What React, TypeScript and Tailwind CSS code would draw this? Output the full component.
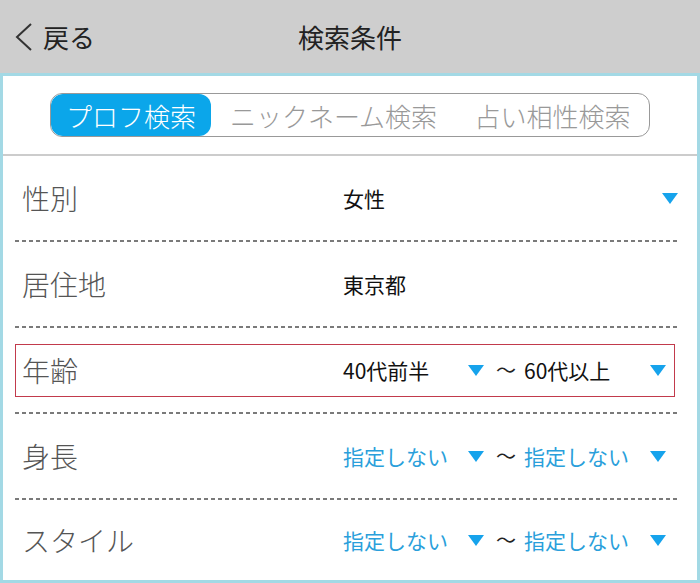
import React from "react"

const font = { fontFamily: '"Noto Sans CJK JP", "Noto Sans", sans-serif' }

function Triangle() {
    return (
        <svg width="16" height="11" viewBox="0 0 16 11" className="shrink-0">
            <polygon points="0,0 16,0 8,11" fill="#16a3ec" />
        </svg>
    )
}

function Dashed() {
    return (
        <div className="ml-[12px] mr-[19px] h-[2px] bg-[repeating-linear-gradient(to_right,#7a7a7a_0_4px,transparent_4px_7px)]" />
    )
}

type T_Range = { from: string; to: string; blue?: boolean }

function RangeValue(props: T_Range) {
    const color = props.blue ? "text-[#2a9fdb]" : "text-[#111]"
    return (
        <div className="flex items-center">
            <span className={`w-[125px] text-[21px] leading-none ${color}`}>{props.from}</span>
            <Triangle />
            <span className="ml-[12px] w-[16px] text-[20px] leading-none text-[#222]">〜</span>
            <span className={`ml-[12px] w-[126px] text-[21px] leading-none ${color}`}>{props.to}</span>
            <Triangle />
        </div>
    )
}

function Row(props: { label: string; children: React.ReactNode; highlight?: boolean; last?: boolean }) {
    return (
        <div className={`flex items-center pl-[12px] pr-[22px] ${props.last ? "flex-1" : "h-[84px]"}`}>
            <div
                className={`flex h-[53px] flex-1 items-center border pl-[6px] ${
                    props.highlight ? "border-[#c23a4c]" : "border-transparent"
                }`}>
                <span className="w-[321px] text-[28px] leading-none font-light text-[#555]">{props.label}</span>
                <div className="flex flex-1 items-center">{props.children}</div>
            </div>
        </div>
    )
}

export default function App() {
    return (
        <div className="flex h-[583px] w-[700px] flex-col bg-white" style={font}>
            <div className="grid h-[73px] grid-cols-[1fr_auto_1fr] items-center bg-[#cecece]">
                <div className="flex items-center gap-[9px] pl-[14px]">
                    <svg width="20" height="30" viewBox="0 0 20 30">
                        <polyline points="17,2 3,15 17,28" fill="none" stroke="#333" strokeWidth="2" />
                    </svg>
                    <span className="text-[26px] text-[#222]">戻る</span>
                </div>
                <span className="text-[26px] text-[#222]">検索条件</span>
                <div />
            </div>

            <div className="flex flex-1 flex-col border-[3px] border-[#a3d9e5]">
                <div className="flex justify-center pt-[17px] pb-[17px]">
                    <div className="flex h-[44px] w-[600px] items-center overflow-hidden rounded-[12px] border-[1.5px] border-[#999]">
                        <div className="flex h-full w-[160px] items-center justify-center rounded-[12px] bg-[#0ba6ea] text-[26px] font-light text-white">
                            プロフ検索
                        </div>
                        <div className="flex h-full w-[245px] items-center justify-center text-[26px] font-light text-[#999]">
                            ニックネーム検索
                        </div>
                        <div className="flex h-full flex-1 items-center justify-center text-[26px] font-light text-[#999]">
                            占い相性検索
                        </div>
                    </div>
                </div>
                <div className="h-[2px] bg-[#cccccc]" />

                <Row label="性別">
                    <span className="text-[21px] leading-none text-[#111]">女性</span>
                    <span className="ml-auto mr-[-4px]">
                        <Triangle />
                    </span>
                </Row>
                <Dashed />
                <Row label="居住地">
                    <span className="text-[21px] leading-none text-[#111]">東京都</span>
                </Row>
                <Dashed />
                <Row label="年齢" highlight>
                    <RangeValue from="40代前半" to="60代以上" />
                </Row>
                <Dashed />
                <Row label="身長">
                    <RangeValue from="指定しない" to="指定しない" blue />
                </Row>
                <Dashed />
                <Row label="スタイル" last>
                    <RangeValue from="指定しない" to="指定しない" blue />
                </Row>
            </div>
        </div>
    )
}
